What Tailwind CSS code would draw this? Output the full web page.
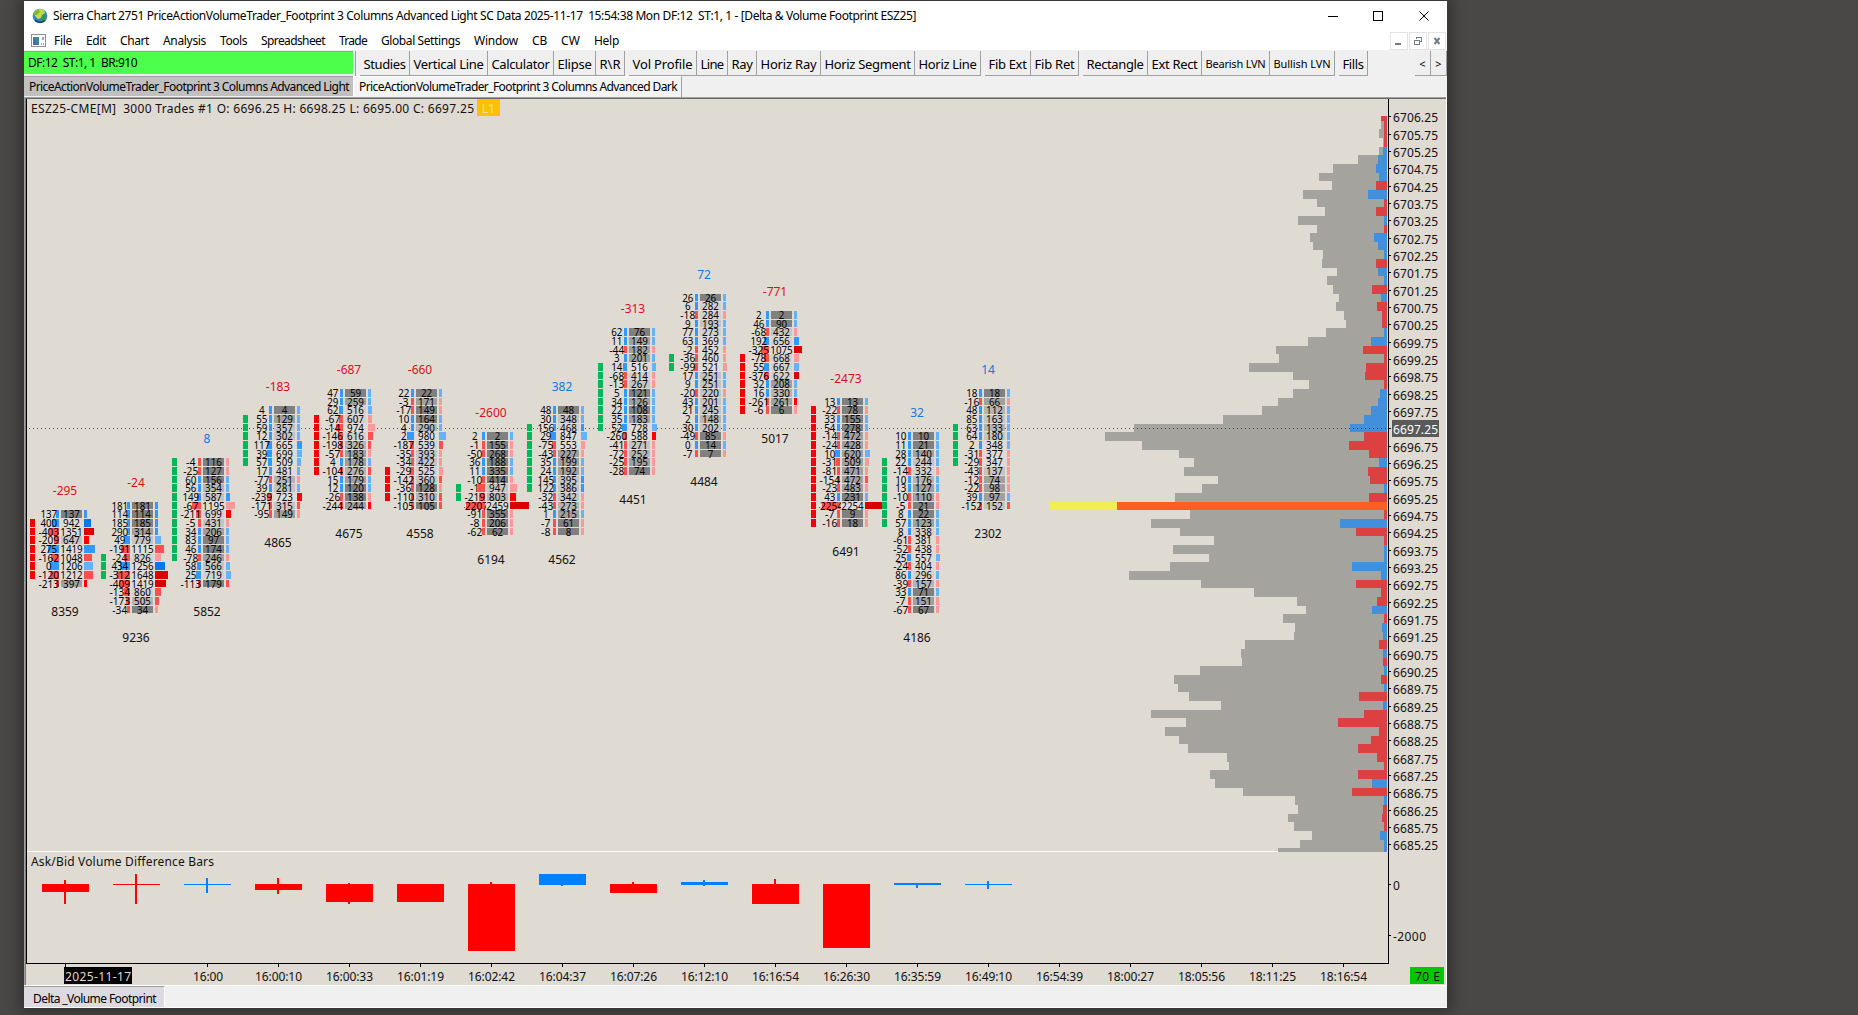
<!DOCTYPE html>
<html lang="en">
<head>
    <meta charset="UTF-8">
    <meta name="viewport" content="width=device-width, initial-scale=1.0">
    <title>Sierra Chart - Delta &amp; Volume Footprint</title>
    <script src="https://cdn.jsdelivr.net/npm/@tailwindcss/browser@4"></script>
</head>
<body class="bg-[#4a4846] h-screen overflow-hidden pl-6 pt-px font-['Noto_Sans','Open_Sans',sans-serif] text-[12px] text-black">
    <div class="w-[1423px] h-[1007px] bg-[#f0f0f0] flex flex-col shadow-[0_0_14px_4px_rgba(0,0,0,0.35)]">

        <!-- Title bar -->
        <div class="h-[30px] shrink-0 bg-white flex items-center pl-2">
            <svg class="w-4 h-4" viewBox="0 0 16 16">
                <circle cx="8" cy="8" r="7.3" fill="#2f86c4"/>
                <path d="M2 5C4 1 9 0 12 2l1 3-3 2-1 3-3 1-3-3z" fill="#c5dc3f"/>
                <path d="M3 3l4-1 1 2-3 3-3 0z" fill="#7fb82e"/>
                <path d="M9 9l4-1 1 2-3 4-2-1z" fill="#3f9a35"/>
                <path d="M3 12c3 3 8 3 10 0" stroke="#173d63" stroke-width="1.3" fill="none"/>
            </svg>
            <span class="ml-[5px] whitespace-pre" data-w="863">Sierra Chart 2751 PriceActionVolumeTrader_Footprint 3 Columns Advanced Light SC Data 2025-11-17  15:54:38 Mon DF:12  ST:1, 1 - [Delta &amp; Volume Footprint ESZ25]</span>
            <svg class="w-[102px] h-3 ml-auto mr-[17px]" viewBox="0 0 102 12" fill="none" stroke="#000" shape-rendering="crispEdges">
                <path d="M0 6.5h10"/>
                <rect x="45.5" y="1.5" width="9" height="9"/>
                <path d="M91.500 1.500l9 9M100.500 1.500l-9 9" shape-rendering="auto"/>
            </svg>
        </div>

        <!-- Menu -->
        <div class="h-[19px] shrink-0 bg-white flex items-center pl-[7px]">
            <svg class="w-[15px] h-[13px]" viewBox="0 0 15 13">
                <rect x=".5" y=".5" width="14" height="12" fill="#fff" stroke="#8c9096"/>
                <rect x="2" y="3" width="6" height="8" fill="#3d8c8c"/>
                <path d="M2 3l6 8H2z" fill="#4a6ea8"/>
                <path d="M12 3v3M10 10h1M12 10h1" stroke="#444"/>
            </svg>
            <div class="flex gap-[14px] ml-2 mt-px">
                <span data-w="18">File</span><span data-w="20">Edit</span><span data-w="29">Chart</span><span data-w="43">Analysis</span><span data-w="27">Tools</span><span data-w="64">Spreadsheet</span><span data-w="28">Trade</span><span data-w="79">Global Settings</span><span data-w="44">Window</span><span data-w="15">CB</span><span data-w="19">CW</span><span data-w="25">Help</span>
            </div>
            <svg class="w-[57px] h-[18px] ml-auto" viewBox="0 0 57 18" fill="none" stroke="#e3e3e3" shape-rendering="crispEdges">
                <rect x=".5" y=".5" width="17" height="17"/><rect x="19.500" y=".5" width="17" height="17"/><rect x="38.500" y=".5" width="17" height="17"/>
                <path d="M5 11.500h6" stroke="#6f7e8c" stroke-width="2"/>
                <path d="M24.500 8.500h5v4h-5zM24 8.500h6M26.500 7V5.500h5v4H30" stroke="#6f7e8c"/>
                <path d="M44.500 6l5 6M49.500 6l-5 6" stroke="#6f7e8c" stroke-width="2" shape-rendering="auto"/>
            </svg>
        </div>

        <!-- Toolbar -->
        <div class="h-[26px] shrink-0 flex items-start pt-px">
            <div class="w-[329px] h-[23px] bg-[#4dff4d] border-t border-[#9a9a9a] flex items-center pl-1"><span class="whitespace-pre" data-w="109">DF:12  ST:1, 1  BR:910</span></div>
            <div class="w-[3px] h-[25px] border-r border-[#a0a0a0]"></div>
            <div id="toolbar" class="flex h-[25px] ml-1 flex-1"></div>
        </div>

        <!-- Chartbook tabs -->
        <div class="h-[21px] shrink-0 flex items-start">
            <div class="w-[329px] h-[20px] bg-[#c0c0c0] border-t border-[#a0a0a0] flex items-center pl-[5px] pt-px"><span data-w="320">PriceActionVolumeTrader_Footprint 3 Columns Advanced Light</span></div>
            <div class="w-[329px] h-[21px] bg-[#f4f4f4] border-l border-r border-l-white border-r-[#a0a0a0] border-t border-t-white flex items-center pl-[5px]"><span data-w="318">PriceActionVolumeTrader_Footprint 3 Columns Advanced Dark</span></div>
        </div>

        <!-- Chart -->
        <svg id="chart" class="w-[1423px] h-[889px] shrink-0 block" viewBox="24 97 1423 889" shape-rendering="crispEdges"></svg>

        <!-- Sheet tabs -->
        <div class="flex-1 flex items-start border-b border-white">
            <div class="w-[141px] h-[21px] bg-[#dcd9df] border-t border-[#a0a0a0] border-r border-r-white flex items-center pl-[9px] pt-[3px]"><span data-w="123">Delta _Volume Footprint</span></div>
        </div>
    </div>

    <script>
        // label, left edge, right edge
        const buttons = [
            ['Studies', 360, 410], ['Vertical Line', 410, 488], ['Calculator', 488, 554], ['Elipse', 554, 596], ['R\\R', 596, 625],
            ['Vol Profile', 629, 697], ['Line', 697, 728], ['Ray', 728, 757], ['Horiz Ray', 757, 821], ['Horiz Segment', 821, 915], ['Horiz Line', 915, 981],
            ['Fib Ext', 985, 1031], ['Fib Ret', 1031, 1079],
            ['Rectangle', 1083, 1148], ['Ext Rect', 1148, 1202], ['Bearish LVN', 1202, 1270], ['Bullish LVN', 1270, 1335],
            ['Fills', 1339, 1368], ['<', 1415, 1431], ['>', 1431, 1447]
        ];
        let last = 360;
        document.getElementById('toolbar').innerHTML = buttons.map(([t, a, b]) => {
            const gap = a - last;
            last = b;
            const small = t.includes('LVN') || t.length === 1 ? 'text-[11px]' : 'text-[13px]';
            const w = t.length > 1 ? `data-w="${b - a - 8}"` : '';
            return `<div class="shrink-0 flex items-center justify-center bg-[#efefef] border-r border-b border-[#a0a0a0] pt-[3px] ${small}" style="width:${b - a}px;margin-left:${gap}px"><span ${w}>${t.replace('<', '&lt;')}</span></div>`;
        }).join('');

        // spread each label over its width, once styles are in
        const fit = () => document.querySelectorAll('[data-w]').forEach(el => {
            el.style.whiteSpace = 'pre';
            el.style.flexShrink = 0;
            el.style.letterSpacing = '0px';
            const cur = el.getBoundingClientRect().width;
            el.style.letterSpacing = ((+el.dataset.w - cur) / el.textContent.length) + 'px';
        });
        fit();
        window.addEventListener('load', fit);
        document.fonts.ready.then(fit);

        const out = [];
        const rect = (x, y, w, h, f) => out.push(`<rect x="${x}" y="${y}" width="${w}" height="${h}" fill="${f}"/>`);
        const text = (x, y, s, o = {}) => out.push(`<text x="${x}" y="${y}" font-size="${o.size || 12}" fill="${o.fill || '#111'}" text-anchor="${o.anchor || 'middle'}"${o.len ? ` textLength="${o.len}" lengthAdjust="${o.adjust || 'spacing'}"` : ''} xml:space="preserve">${s}</text>`);
        const rowY = k => Math.round(120.55 + 8.663 * (k - 1));

        // frame
        rect(24, 97, 1423, 889, '#dfdad2');
        rect(24, 97, 1422, 1, '#a0a0a0');
        rect(24, 98, 1422, 1, '#696969');
        rect(24, 97, 1, 888, '#a0a0a0');
        rect(25, 98, 1, 887, '#807e7c');
        rect(1446, 97, 1, 889, '#ffffff');
        rect(24, 985, 1423, 1, '#ffffff');
        rect(26, 99, 1, 865, '#000');

        // volume profile: [left of volume, left of delta, sign], thirds of a pixel from x=1030
        const profile = [
            [1070,1053,-1],[1053,1062,-1],[1047,1062,-1],[1059,1062,-1],[1047,1059,1],[984,1044,1],[909,1038,1],[867,1047,1],[906,1038,-1],[819,1014,1],
            [861,1062,-1],[885,1038,-1],[804,1062,1],[861,1062,-1],[840,1032,1],[849,1044,1],[879,1062,1],[876,1038,-1],[921,1044,1],[891,1062,1],
            [909,1026,-1],[927,1053,1],[918,1041,-1],[942,1056,-1],[948,1056,-1],[888,1062,1],[834,1023,1],[738,999,-1],[747,1062,-1],[657,1008,-1],
            [789,1005,-1],[837,1062,-1],[789,1050,1],[744,1044,1],[696,1023,1],[579,1002,1],[312,960,1],[225,1002,-1],[336,957,-1],[447,1017,-1],
            [492,1047,1],[462,1014,-1],[564,1020,-1],[516,1062,1],[435,1017,-1],[60,261,0],[480,1062,-1],[363,930,1],[450,978,-1],[552,1062,-1],
            [429,1062,1],[537,1062,1],[420,966,1],[297,1053,1],[513,978,-1],[672,1053,-1],[801,1041,-1],[828,1026,1],[759,1062,-1],[795,1056,1],
            [792,1059,1],[645,1047,-1],[633,1059,1],[636,1059,-1],[510,1062,1],[432,1053,-1],[444,1062,1],[477,987,-1],[573,1059,1],[363,1002,-1],
            [468,924,-1],[405,1047,-1],[447,1023,-1],[474,984,-1],[591,1041,-1],[597,1062,-1],[540,984,-1],[555,1026,1],[639,966,-1],[795,1062,1],
            [804,1059,-1],[774,1056,-1],[792,1062,-1],[846,1050,1],[810,1062,1],[744,1062,1]
        ];
        rect(27, 851, 1361, 1, '#ffffff');
        profile.forEach(([v, d, s], k) => {
            const y = k === 0 ? 116 : rowY(k);
            const h = (k === 85 ? 852 : rowY(k + 1)) - y;
            const vx = 1030 + Math.round(v / 3), dx = 1030 + Math.round(d / 3);
            rect(vx, y, 1387 - vx, h, s === 0 ? '#f2ee50' : '#a5a39e');
            rect(dx, y, 1387 - dx, h, s === 0 ? '#fb6020' : s > 0 ? '#428fdc' : '#dd4040');
        });

        // last price line
        out.push('<path d="M29 428.500H1388" stroke="#000" stroke-opacity=".6" stroke-dasharray="1 3"/>');

        // footprint columns: title, total, first row, strip colour, strip from/to, delta/volume rows
        const cols = [
            ['-295', 8359, 46, 'r', 1, 7, '137/137 400/942 -403/1351 -209/647 275/1419 -162/1048 0/1206 -120/1212 -213/397'],
            ['-24', 9236, 45, 'g', 6, 8, '181/181 114/114 185/185 290/314 49/779 -191/1115 -24/826 434/1256 -312/1648 -409/1419 -134/860 -173/505 -34/34'],
            ['8', 5852, 40, 'g', 0, 11, '-4/116 -25/127 60/156 56/354 149/587 -67/1195 -211/699 -5/431 34/206 83/97 46/174 -78/246 58/566 25/719 -113/179'],
            ['-183', 4865, 34, 'g', 1, 6, '4/4 55/129 59/357 12/302 117/665 39/699 57/509 17/481 -77/251 39/281 -239/723 -171/315 -95/149'],
            ['-687', 4675, 32, 'r', 3, 9, '47/59 29/259 62/516 -67/607 -14/974 -146/616 -198/326 -57/183 4/178 -104/276 15/179 12/120 -26/138 -244/244'],
            ['-660', 4558, 32, 'r', 9, 12, '22/22 -3/171 -17/149 10/164 4/290 2/980 -187/539 -35/393 -34/422 -29/525 -142/360 -36/128 -110/310 -105/105'],
            ['-2600', 6194, 37, 'g', 6, 7, '2/2 -1/155 -50/268 36/188 11/335 -10/414 -1/947 -219/803 -2207/2459 -91/355 -8/206 -62/62'],
            ['382', 4562, 34, 'g', 2, 9, '48/48 30/348 156/468 29/847 -75/553 -43/227 35/199 24/192 145/395 122/386 -32/342 -43/273 1/215 -7/61 -8/8'],
            ['-313', 4451, 25, 'g', 4, 11, '62/76 11/149 -44/182 3/201 14/516 -68/414 -13/267 5/121 34/126 22/108 35/183 52/728 -260/588 -41/271 -72/252 -25/195 -28/74'],
            ['72', 4484, 21, 'g', 7, 8, '26/26 6/282 -18/284 9/193 77/273 63/369 -2/452 -36/460 -99/521 17/251 9/251 -20/220 43/201 21/245 2/148 30/202 -49/85 0/14 -7/7'],
            ['-771', 5017, 23, 'r', 5, 11, '2/2 46/90 -68/432 192/656 -325/1075 -78/668 55/667 -376/622 32/208 16/330 -261/261 -6/6'],
            ['-2473', 6491, 33, 'r', 1, 14, '13/13 -22/78 33/155 54/278 -14/472 -24/428 10/620 -31/509 -81/471 -154/472 -23/483 43/231 -2254/2254 -7/9 -16/18'],
            ['32', 4186, 37, 'g', 3, 10, '10/10 11/21 28/140 22/244 -14/332 10/176 13/127 -10/110 -5/21 8/22 57/123 8/338 -61/381 -52/438 25/557 -24/404 86/296 -39/157 33/71 -7/151 -67/67'],
            ['14', 2302, 32, 'g', 4, 8, '18/18 -16/66 48/112 85/163 63/133 64/180 2/348 -31/377 -29/347 -43/137 -12/74 -22/98 39/97 -152/152']
        ];
        const shade = r => r < .17 ? '#808080' : r < .28 ? '#a0a0a0' : r < .36 ? '#b4b4b4' : r < .5 ? '#c4c4c4' : r < .65 ? '#d2d1d0' : '#dedcd9';
        const heat = d => d >= 0
            ? (d >= 400 ? '#0078f0' : d >= 100 ? '#3399ff' : '#66b2ff')
            : (d <= -300 ? '#d80000' : d <= -200 ? '#ff0000' : d <= -100 ? '#ff5050' : '#ff9999');
        cols.forEach(([title, total, first, sc, s0, s1, data], i) => {
            const x = 30 + 71 * i;
            const rows = data.split(' ').map(r => r.split('/').map(Number));
            const max = Math.max(...rows.map(r => r[1]));
            rows.forEach(([d, v], j) => {
                const y = rowY(first + j), h = rowY(first + j + 1) - y - 1;
                const w = Math.max(3, Math.floor(v / 123));
                if (j >= s0 && j <= s1) rect(x, y, 5, h, sc === 'r' ? '#f40000' : '#00b858');
                rect(x + 29 - w, y, w, h, d >= 0 ? '#3399ff' : '#ff5050');
                rect(x + 31, y, 21, h, shade(v / max));
                rect(x + 54, y, w, h, heat(d));
            });
            rows.forEach(([d, v], j) => {
                const y = rowY(first + j) + 8;
                const wide = d < -999;
                // four-digit deltas are cut to their column
                if (wide) out.push(`<svg x="${x + 8}" y="${y - 9}" width="22" height="11" viewBox="${x + 8} ${y - 9} 22 11">`);
                text(x + 18.8, y, d, { size: 10.5, fill: '#000', adjust: 'spacingAndGlyphs', len: (Math.abs(d) + '').length * 5.6 + (d < 0 ? 3.8 : 0) });
                if (wide) out.push('</svg>');
                text(x + 41.5, y, v, { size: 10.5, fill: '#000', adjust: 'spacingAndGlyphs', len: (v + '').length * 5.6 });
            });
            text(x + 35, rowY(first) - 15.5, title, { fill: title[0] === '-' ? '#d8101c' : '#1878d8' });
            text(x + 35, rowY(first + rows.length) + 28, total);
        });

        // header
        text(31, 113, 'ESZ25-CME[M]  3000 Trades #1 O: 6696.25 H: 6698.25 L: 6695.00 C: 6697.25', { anchor: 'start', len: 443 });
        rect(477, 99, 23, 17, '#ffc000');
        text(488.5, 113, 'L1', { fill: '#e8dcc0', len: 13 });
        text(31, 866, 'Ask/Bid Volume Difference Bars', { anchor: 'start', len: 183 });

        // difference bars: body top/bottom, wick top/bottom
        const diff = [
            [884,892,880,904],[884,885,874,904],[884,885,878,893],[884,890,878,894],[884,902,883,904],[884,902,884,902],[884,951,882,951],
            [874,885,874,886],[884,893,882,893],[882,885,880,886],[884,904,879,904],[884,948,884,948],[883,885,883,888],[884,885,881,889]
        ];
        diff.forEach(([a, b, c, d], i) => {
            const f = cols[i][0][0] === '-' ? '#ff0000' : '#0080ff';
            rect(42 + 71 * i, a, 47, b - a, f);
            rect(64 + 71 * i, c, 2, d - c, f);
        });

        // axes
        rect(1388, 99, 1, 865, '#000');
        rect(26, 963, 1363, 1, '#000');
        for (let n = 0; n < 43; n++) {
            const y = Math.round(116.3 + 17.333 * n);
            const price = (6706.25 - n * .5).toFixed(2);
            const now = price === '6697.25';
            rect(1389, y, 2, 1, '#000');
            if (now) rect(1392, 420, 47, 17, '#5a5a5a');
            text(1393, y + 6, price, { anchor: 'start', len: 45, fill: now ? '#fff' : '#111' });
        }
        rect(1389, 884, 2, 1, '#000');
        text(1393, 890, '0', { anchor: 'start' });
        rect(1389, 935, 2, 1, '#000');
        text(1393, 941, '-2000', { anchor: 'start', len: 33 });
        rect(64, 967, 68, 17, '#000');
        text(65, 981, '2025-11-17', { anchor: 'start', len: 66, fill: '#dfdad2' });
        const times = ['', '', '16:00', '16:00:10', '16:00:33', '16:01:19', '16:02:42', '16:04:37', '16:07:26', '16:12:10', '16:16:54', '16:26:30', '16:35:59', '16:49:10', '16:54:39', '18:00:27', '18:05:56', '18:11:25', '18:16:54'];
        times.forEach((t, i) => {
            if (i !== 1) rect(65 + 71 * i, 964, 1, 3, '#000');
            if (t) text(65.5 + 71 * i + (i === 2 ? .5 : 0), 981, t, { len: t.length > 5 ? 47 : 30 });
        });
        rect(1410, 967, 34, 17, '#00c800');
        text(1427.5, 981, '70 E', { len: 25 });

        document.getElementById('chart').innerHTML = out.join('');
    </script>
</body>
</html>
